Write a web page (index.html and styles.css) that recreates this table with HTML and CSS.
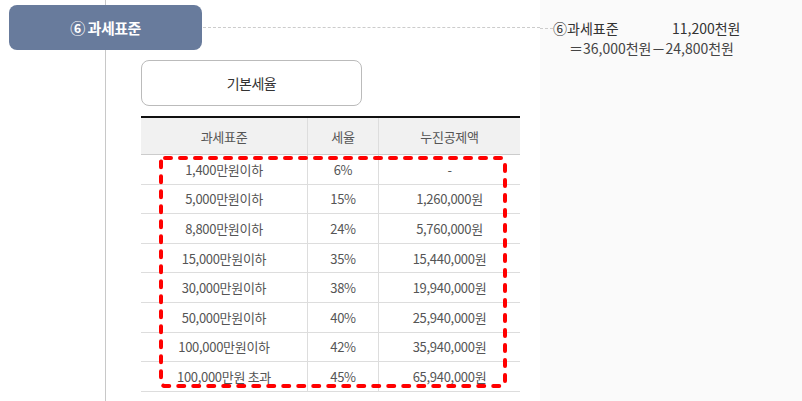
FILE: index.html
```html
<!DOCTYPE html>
<html>
<head>
    <title>과세표준</title>
    <link rel="stylesheet" href="styles.css">
</head>
<body>
    <div class="page">
        <div class="main">
            <div class="step-row">
                <div class="step-badge">⑥ 과세표준</div>
                <div class="connector"></div>
            </div>

            <div class="content">
                <div class="rate-button">기본세율</div>

                <div class="table-wrap">
                    <table class="rate-table">
                        <thead>
                            <tr>
                                <th class="col-base">과세표준</th>
                                <th class="col-rate">세율</th>
                                <th class="col-deduct">누진공제액</th>
                            </tr>
                        </thead>
                        <tbody>
                            <tr><td>1,400만원이하</td><td>6%</td><td>-</td></tr>
                            <tr><td>5,000만원이하</td><td>15%</td><td>1,260,000원</td></tr>
                            <tr><td>8,800만원이하</td><td>24%</td><td>5,760,000원</td></tr>
                            <tr><td>15,000만원이하</td><td>35%</td><td>15,440,000원</td></tr>
                            <tr><td>30,000만원이하</td><td>38%</td><td>19,940,000원</td></tr>
                            <tr><td>50,000만원이하</td><td>40%</td><td>25,940,000원</td></tr>
                            <tr><td>100,000만원이하</td><td>42%</td><td>35,940,000원</td></tr>
                            <tr><td>100,000만원 초과</td><td>45%</td><td>65,940,000원</td></tr>
                        </tbody>
                    </table>

                    <!-- red highlight around the body rows -->
                    <svg class="highlight" width="348" height="232" viewBox="0 0 348 232">
                        <rect x="2" y="2" width="344" height="228" rx="4" ry="4"
                              fill="none" stroke="#ff0000" stroke-width="4"
                              stroke-dasharray="6 9" stroke-linecap="round"/>
                    </svg>
                </div>
            </div>
        </div>

        <div class="side">
            <div class="calc-line">
                <span class="connector short"></span>
                <span class="calc-label">⑥과세표준</span>
                <span>11,200천원</span>
            </div>
            <div class="calc-formula">＝36,000천원－24,800천원</div>
        </div>
    </div>
</body>
</html>
```

FILE: styles.css
```css
body {
    margin: 0;
    font-family: "Noto Sans CJK KR", "Noto Sans", sans-serif;
    color: #333;
}
.page {
    display: flex;
    height: 100vh;
}
.main {
    width: 540px;
    position: relative;
    background: #fff;
}
.main::before {
    content: "";
    position: absolute;
    left: 105px;
    top: 0;
    bottom: 0;
    width: 1px;
    background: #c8c8c8;
}
.step-row {
    display: flex;
    align-items: center;
    padding: 5px 0 0 9px;
}
.step-badge {
    position: relative;
    width: 193px;
    height: 45px;
    display: flex;
    align-items: center;
    justify-content: center;
    background: #687b9c;
    border-radius: 8px;
    color: #fff;
    font-size: 15px;
    font-weight: 700;
    letter-spacing: -0.5px;
}
.connector {
    flex: 1;
    margin-left: 1px;
    border-top: 1px dashed #ccc;
}
.connector.short {
    flex: none;
    width: 13px;
    margin: 0;
}
.content {
    position: relative;
    padding: 10px 0 0 141px;
}
.rate-button {
    box-sizing: border-box;
    width: 221px;
    height: 46px;
    display: flex;
    align-items: center;
    justify-content: center;
    border: 1px solid #bbb;
    border-radius: 8px;
    font-size: 14px;
    letter-spacing: -0.5px;
    color: #333;
}
.table-wrap {
    position: relative;
    width: 379px;
    margin-top: 10px;
}
.rate-table {
    width: 100%;
    border-collapse: collapse;
    border-top: 2px solid #111;
    font-size: 13px;
    letter-spacing: -0.3px;
    color: #555;
    text-align: center;
}
.rate-table th {
    height: 36px;
    padding: 0;
    font-weight: 400;
    background: #f1f1f1;
    border-bottom: 1px solid #ccc;
    border-left: 1px solid #ddd;
}
.rate-table td {
    height: 28.6px;
    padding: 0;
    border-bottom: 1px solid #ddd;
    border-left: 1px solid #ddd;
}
.rate-table th:first-child,
.rate-table td:first-child {
    border-left: none;
}
.col-base {
    width: 166px;
}
.col-rate {
    width: 70px;
}
.highlight {
    position: absolute;
    left: 18px;
    top: 40px;
}
.side {
    flex: 1;
    background: #fafafa;
    padding-top: 18px;
    font-size: 14px;
    line-height: 20px;
}
.calc-line {
    display: flex;
    align-items: center;
}
.calc-label {
    width: 119px;
}
.calc-formula {
    padding-left: 29px;
    color: #444;
}
```
